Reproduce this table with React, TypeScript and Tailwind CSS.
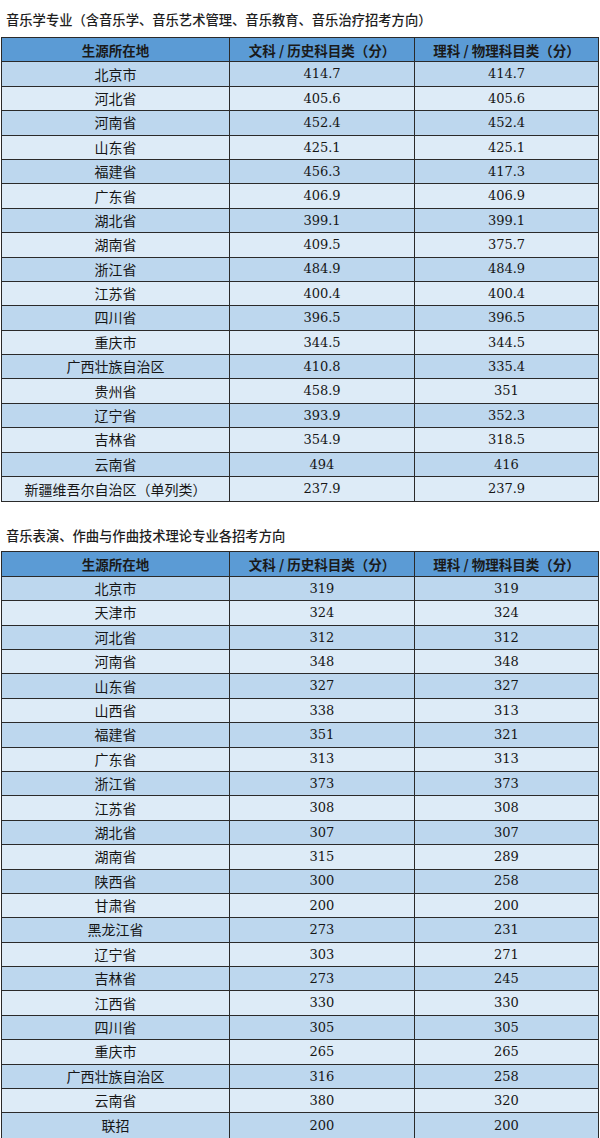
import React from "react";

const table1: [string, string, string][] = [
  ["北京市", "414.7", "414.7"],
  ["河北省", "405.6", "405.6"],
  ["河南省", "452.4", "452.4"],
  ["山东省", "425.1", "425.1"],
  ["福建省", "456.3", "417.3"],
  ["广东省", "406.9", "406.9"],
  ["湖北省", "399.1", "399.1"],
  ["湖南省", "409.5", "375.7"],
  ["浙江省", "484.9", "484.9"],
  ["江苏省", "400.4", "400.4"],
  ["四川省", "396.5", "396.5"],
  ["重庆市", "344.5", "344.5"],
  ["广西壮族自治区", "410.8", "335.4"],
  ["贵州省", "458.9", "351"],
  ["辽宁省", "393.9", "352.3"],
  ["吉林省", "354.9", "318.5"],
  ["云南省", "494", "416"],
  ["新疆维吾尔自治区（单列类）", "237.9", "237.9"],
];

const table2: [string, string, string][] = [
  ["北京市", "319", "319"],
  ["天津市", "324", "324"],
  ["河北省", "312", "312"],
  ["河南省", "348", "348"],
  ["山东省", "327", "327"],
  ["山西省", "338", "313"],
  ["福建省", "351", "321"],
  ["广东省", "313", "313"],
  ["浙江省", "373", "373"],
  ["江苏省", "308", "308"],
  ["湖北省", "307", "307"],
  ["湖南省", "315", "289"],
  ["陕西省", "300", "258"],
  ["甘肃省", "200", "200"],
  ["黑龙江省", "273", "231"],
  ["辽宁省", "303", "271"],
  ["吉林省", "273", "245"],
  ["江西省", "330", "330"],
  ["四川省", "305", "305"],
  ["重庆市", "265", "265"],
  ["广西壮族自治区", "316", "258"],
  ["云南省", "380", "320"],
  ["联招", "200", "200"],
];

const cjk = "font-['Noto_Sans_CJK_SC','Noto_Sans',sans-serif]";
const num = "font-['DejaVu_Serif','Noto_Sans_CJK_SC',serif]";

const ScoreTable = ({ rows }: { rows: [string, string, string][] }) => (
  <div className="ml-[1px] w-[598px] border border-[#2a2a2a]">
    {/* 表头 */}
    <div className="flex h-[24.4px] bg-[#5b9bd5] border-b border-[#2a2a2a] text-[13.5px] font-bold text-[#1a1a1a]">
      <div className={`w-[228px] border-r border-[#2a2a2a] flex items-center justify-center ${cjk}`}>
        生源所在地
      </div>
      <div className={`w-[185px] border-r border-[#2a2a2a] flex items-center justify-center ${cjk}`}>
        文科 / 历史科目类（分）
      </div>
      <div className={`flex-1 flex items-center justify-center ${cjk}`}>
        理科 / 物理科目类（分）
      </div>
    </div>
    {rows.map((r, i) => (
      <div
        key={r[0]}
        className={`flex h-[24.4px] text-[#161616] ${
          i % 2 === 0 ? "bg-[#bdd7ee]" : "bg-[#ddebf7]"
        } ${i < rows.length - 1 ? "border-b border-[#2a2a2a]" : ""}`}
      >
        <div className={`w-[228px] border-r border-[#2a2a2a] flex items-center justify-center text-[14px] ${cjk}`}>
          {r[0]}
        </div>
        <div className={`w-[185px] border-r border-[#2a2a2a] flex items-center justify-center text-[13px] ${num}`}>
          {r[1]}
        </div>
        <div className={`flex-1 flex items-center justify-center text-[13px] ${num}`}>
          {r[2]}
        </div>
      </div>
    ))}
  </div>
);

const App = () => {
  return (
    <div className="w-[600px] h-[1138px] bg-white overflow-hidden">
      <div className={`h-[37px] flex items-center pl-[6px] pt-[2px] text-[13.3px] font-medium text-[#1e1e1e] ${cjk}`}>
        音乐学专业（含音乐学、音乐艺术管理、音乐教育、音乐治疗招考方向）
      </div>
      <ScoreTable rows={table1} />
      <div className={`h-[49px] flex items-end pb-[5px] pl-[6px] text-[13.3px] font-medium text-[#1e1e1e] ${cjk}`}>
        音乐表演、作曲与作曲技术理论专业各招考方向
      </div>
      <ScoreTable rows={table2} />
    </div>
  );
};

export default App;
